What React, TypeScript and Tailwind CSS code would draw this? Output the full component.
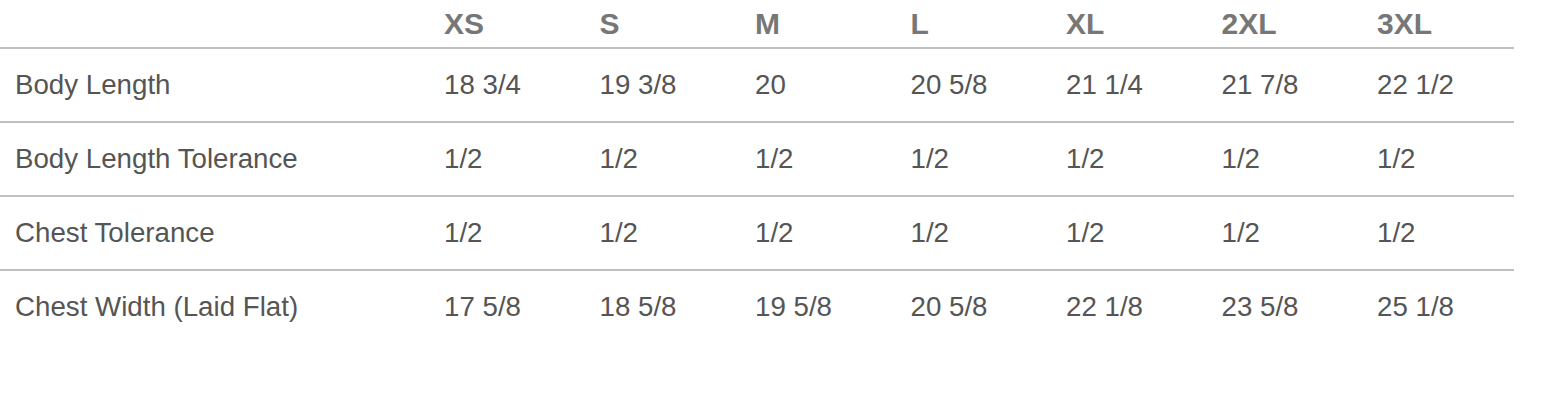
import React from "react";

const sizes = ["XS", "S", "M", "L", "XL", "2XL", "3XL"];
const rows: { label: string; values: string[] }[] = [
  { label: "Body Length", values: ["18 3/4", "19 3/8", "20", "20 5/8", "21 1/4", "21 7/8", "22 1/2"] },
  { label: "Body Length Tolerance", values: ["1/2", "1/2", "1/2", "1/2", "1/2", "1/2", "1/2"] },
  { label: "Chest Tolerance", values: ["1/2", "1/2", "1/2", "1/2", "1/2", "1/2", "1/2"] },
  { label: "Chest Width (Laid Flat)", values: ["17 5/8", "18 5/8", "19 5/8", "20 5/8", "22 1/8", "23 5/8", "25 1/8"] },
];

export default function App() {
  return (
    <div className="w-[1546px] h-[402px] bg-white" style={{ fontFamily: '"Liberation Sans", Arial, sans-serif' }}>
      <table className="table-fixed border-collapse w-[1514px]">
        <colgroup>
          <col className="w-[425.5px]" />
          {sizes.map((s) => (
            <col key={s} className="w-[155.5px]" />
          ))}
        </colgroup>
        <thead>
          <tr className="h-[48px] border-b-2 border-[#c0c0c0]">
            <th className="p-0" />
            {sizes.map((s) => (
              <th key={s} className="p-0 pl-[18.5px] text-left align-middle text-[30px] font-bold text-[#777777] leading-none">
                {s}
              </th>
            ))}
          </tr>
        </thead>
        <tbody>
          {rows.map((r, i) => (
            <tr
              key={r.label}
              className={i < rows.length - 1 ? "h-[74px] border-b-2 border-[#c0c0c0]" : "h-[72px]"}
            >
              <td className="p-0 pl-[15px] text-left align-middle text-[27.7px] text-[#555555] leading-none whitespace-nowrap">
                {r.label}
              </td>
              {r.values.map((v, j) => (
                <td key={j} className="p-0 pl-[18.5px] text-left align-middle text-[27.7px] text-[#555555] leading-none whitespace-nowrap">
                  {v}
                </td>
              ))}
            </tr>
          ))}
        </tbody>
      </table>
    </div>
  );
}
